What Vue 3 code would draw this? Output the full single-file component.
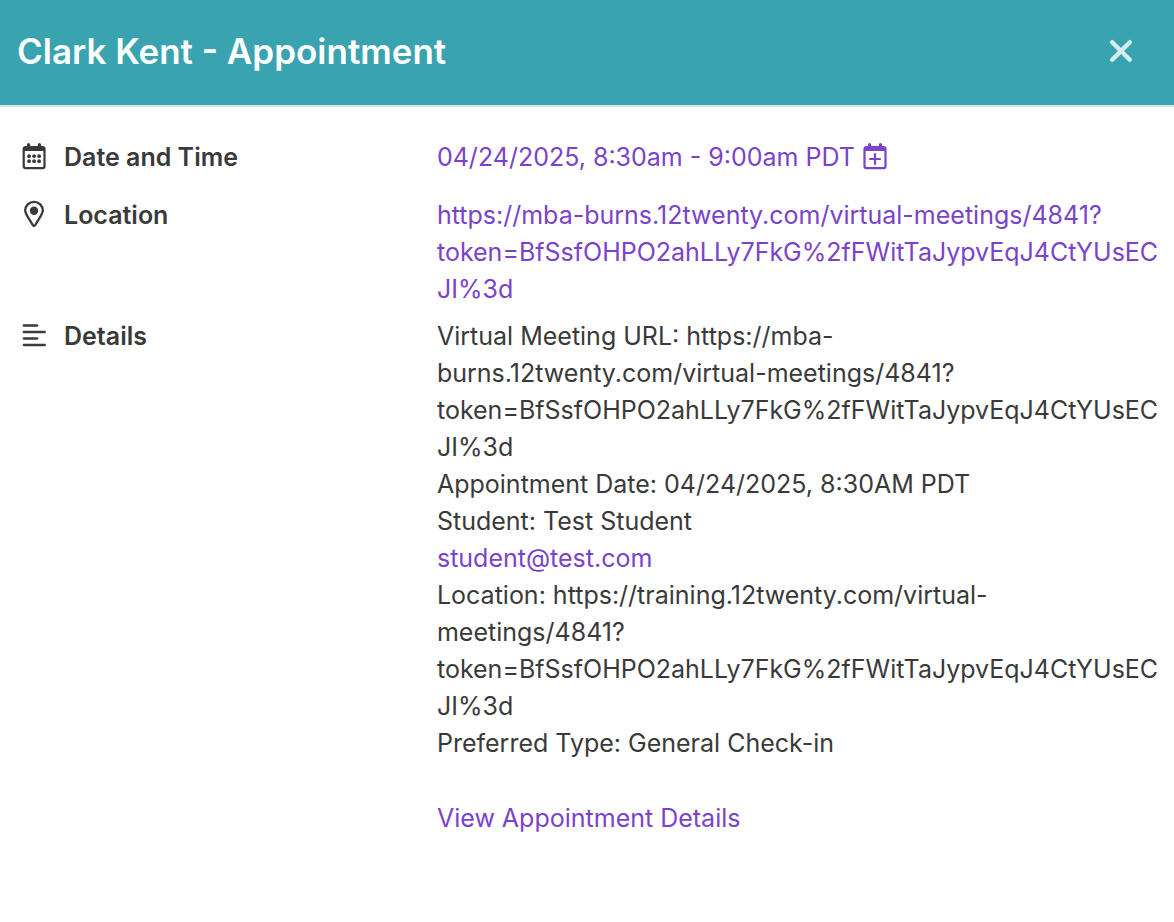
<script setup>
const meetingUrl = [
  'https://mba-burns.12twenty.com/virtual-meetings/4841?',
  'token=BfSsfOHPO2ahLLy7FkG%2fFWitTaJypvEqJ4CtYUsEC',
  'JI%3d',
]

const before = [
  'Virtual Meeting URL: https://mba-',
  'burns.12twenty.com/virtual-meetings/4841?',
  'token=BfSsfOHPO2ahLLy7FkG%2fFWitTaJypvEqJ4CtYUsEC',
  'JI%3d',
  'Appointment Date: 04/24/2025, 8:30AM PDT',
  'Student: Test Student',
]

const after = [
  'Location: https://training.12twenty.com/virtual-',
  'meetings/4841?',
  'token=BfSsfOHPO2ahLLy7FkG%2fFWitTaJypvEqJ4CtYUsEC',
  'JI%3d',
  'Preferred Type: General Check-in',
]
</script>

<template>
  <section class="dialog" role="dialog" aria-labelledby="dialog-title">
    <header class="header">
      <h1 id="dialog-title" class="title">Clark Kent - Appointment</h1>
      <button class="close" type="button" aria-label="Close">
        <svg width="24" height="24" viewBox="0 0 24 24" fill="none" stroke="currentColor" stroke-width="4.4" stroke-linecap="round">
          <path d="M3.2 3.2 20.8 20.8M20.8 3.2 3.2 20.8" />
        </svg>
      </button>
    </header>

    <dl class="fields">
      <div class="row date-row">
        <dt class="label">
          <svg class="icon" width="24" height="28" viewBox="0 0 24 28" fill="currentColor">
            <path fill-rule="evenodd" d="M5 4V2.5a1.6 1.6 0 0 1 3.200 0V4h7.600V2.500a1.600 1.600 0 0 1 3.200 0V4h1.600A3 3 0 0 1 23.600 7v17.200a3 3 0 0 1-3 3H3.600a3 3 0 0 1-3-3V7a3 3 0 0 1 3-3zM2.800 9v15q0 1 1 1h16.600q1 0 1-1V9z" />
            <circle cx="7.100" cy="14.200" r="1.900" />
            <circle cx="12.100" cy="14.200" r="1.900" />
            <circle cx="17.100" cy="14.200" r="1.900" />
            <circle cx="7.100" cy="19.200" r="1.900" />
            <circle cx="12.100" cy="19.200" r="1.900" />
            <circle cx="17.100" cy="19.200" r="1.900" />
          </svg>
          Date and Time
        </dt>
        <dd class="value">
          <a class="link with-icon" href="#">
            <span>04/24/2025, 8:30am - 9:00am PDT</span>
            <svg class="icon" width="24" height="28" viewBox="0 0 24 28" fill="currentColor">
              <path fill-rule="evenodd" d="M5 4V2.500a1.600 1.600 0 0 1 3.200 0V4h7.600V2.500a1.600 1.600 0 0 1 3.200 0V4h1.600A3 3 0 0 1 23.600 7v17.200a3 3 0 0 1-3 3H3.400a3 3 0 0 1-3-3V7a3 3 0 0 1 3-3zM2.600 9v15q0 1 1 1h16.800q1 0 1-1V9z" />
              <path d="M10.900 11.200h2.200v4.700h4.700v2.200h-4.700v4.700h-2.200v-4.700H6.200v-2.200h4.700z" />
            </svg>
          </a>
        </dd>
      </div>

      <div class="row">
        <dt class="label">
          <svg class="icon" width="24" height="28" viewBox="0 0 24 28">
            <path d="M12 26C11.200 26 10.700 25 10 23.800C7 18.800 3.200 14 3.200 10.600a8.800 8.800 0 0 1 17.600 0C20.800 14 17 18.800 14 23.800C13.300 25 12.800 26 12 26z" fill="none" stroke="currentColor" stroke-width="2.300" />
            <circle cx="12" cy="10.700" r="4.200" fill="currentColor" />
          </svg>
          Location
        </dt>
        <dd class="value">
          <a class="link" href="#"><span v-for="line in meetingUrl" :key="line" class="line">{{ line }}</span></a>
        </dd>
      </div>

      <div class="row">
        <dt class="label">
          <svg class="icon" width="24" height="28" viewBox="0 0 24 28" fill="none" stroke="currentColor" stroke-width="2.300" stroke-linecap="round">
            <path d="M1.800 4.500h13.400M1.800 11h21M1.800 17.500h13.400M1.800 24h21" />
          </svg>
          Details
        </dt>
        <dd class="value">
          <span v-for="line in before" :key="line" class="line">{{ line }}</span>
          <a class="link" href="mailto:student@test.com">student@test.com</a>
          <span v-for="line in after" :key="line" class="line">{{ line }}</span>
          <a class="link more" href="#">View Appointment Details</a>
        </dd>
      </div>
    </dl>
  </section>
</template>

<style>
body {
  margin: 0;
  background: #fff;
}
</style>

<style scoped>
.dialog {
  font-family: Inter, "Liberation Sans", sans-serif;
  font-size: 25px;
  line-height: 37px;
  color: #3a3a3a;
}

.header {
  display: flex;
  align-items: flex-start;
  justify-content: space-between;
  padding: 27px 41px 30px 17px;
  background: #39a3af;
  border-bottom: 2px solid #dfe2e2;
}

.title {
  margin: 0;
  font-size: 35px;
  line-height: 48px;
  font-weight: 600;
  color: #fff;
}

.close {
  display: flex;
  margin: 0;
  padding: 12px 0;
  border: 0;
  background: none;
  color: #d7edef;
  cursor: pointer;
}

.fields {
  display: flex;
  flex-direction: column;
  gap: 10px;
  margin: 0;
  padding: 32px 22px;
}

.row {
  display: grid;
  grid-template-columns: 11fr 19fr;
  column-gap: 1px;
}

.date-row {
  min-height: 48px;
}

.label {
  display: flex;
  align-items: flex-start;
  align-self: start;
  gap: 18px;
  font-weight: 600;
}

.icon {
  flex: none;
  margin-top: 3px;
}

.value {
  margin: 0;
  min-width: 0;
}

.line {
  display: block;
  white-space: nowrap;
}

.link {
  display: block;
  color: #7a43c9;
  text-decoration: none;
}

.with-icon {
  display: flex;
  align-items: flex-start;
  gap: 8px;
}

.more {
  margin-top: 38px;
}
</style>
